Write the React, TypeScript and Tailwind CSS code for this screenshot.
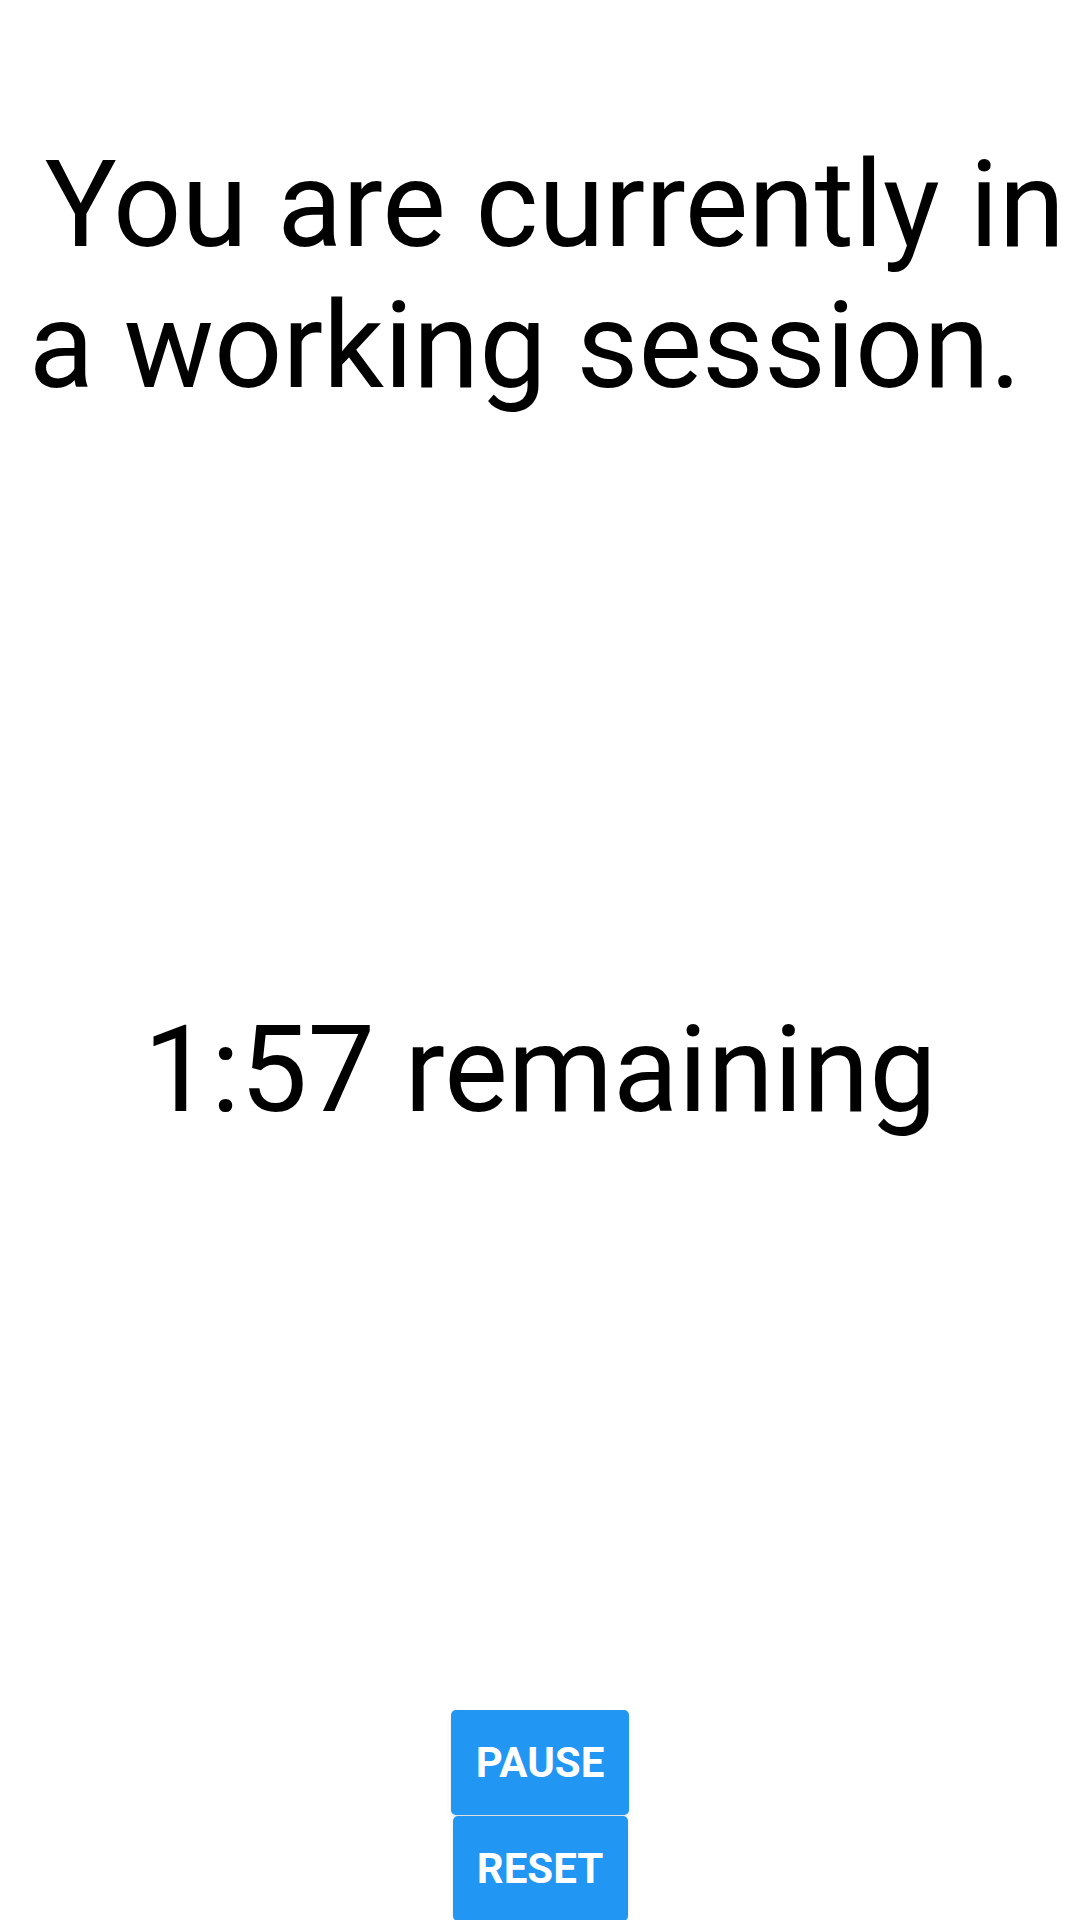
import React from 'react';

const App: React.FC = () => {
  return (
    <div className="w-[1080px] h-[1920px] overflow-hidden bg-white font-['Roboto',sans-serif] text-black">
      <div className="pt-[135px] text-center">
        <h1 className="text-[120px] leading-[140.6px] font-normal">
          {'\u00A0You are currently in a working session.\u00A0'}
        </h1>
      </div>

      <div className="mt-[584px] text-center">
        <p className="text-[120px] leading-[140.6px]">1:57 remaining</p>
      </div>

      <div className="mt-[569px] flex flex-col items-center">
        <button className="w-[178px] h-[105px] rounded-[5px] bg-[#2196f3] text-white text-[42px] font-bold uppercase shadow-md">
          Pause
        </button>
        <button className="mt-[1px] w-[175px] h-[105px] rounded-[5px] bg-[#2196f3] text-white text-[42px] font-bold uppercase shadow-md">
          Reset
        </button>
      </div>
    </div>
  );
};

export default App;
